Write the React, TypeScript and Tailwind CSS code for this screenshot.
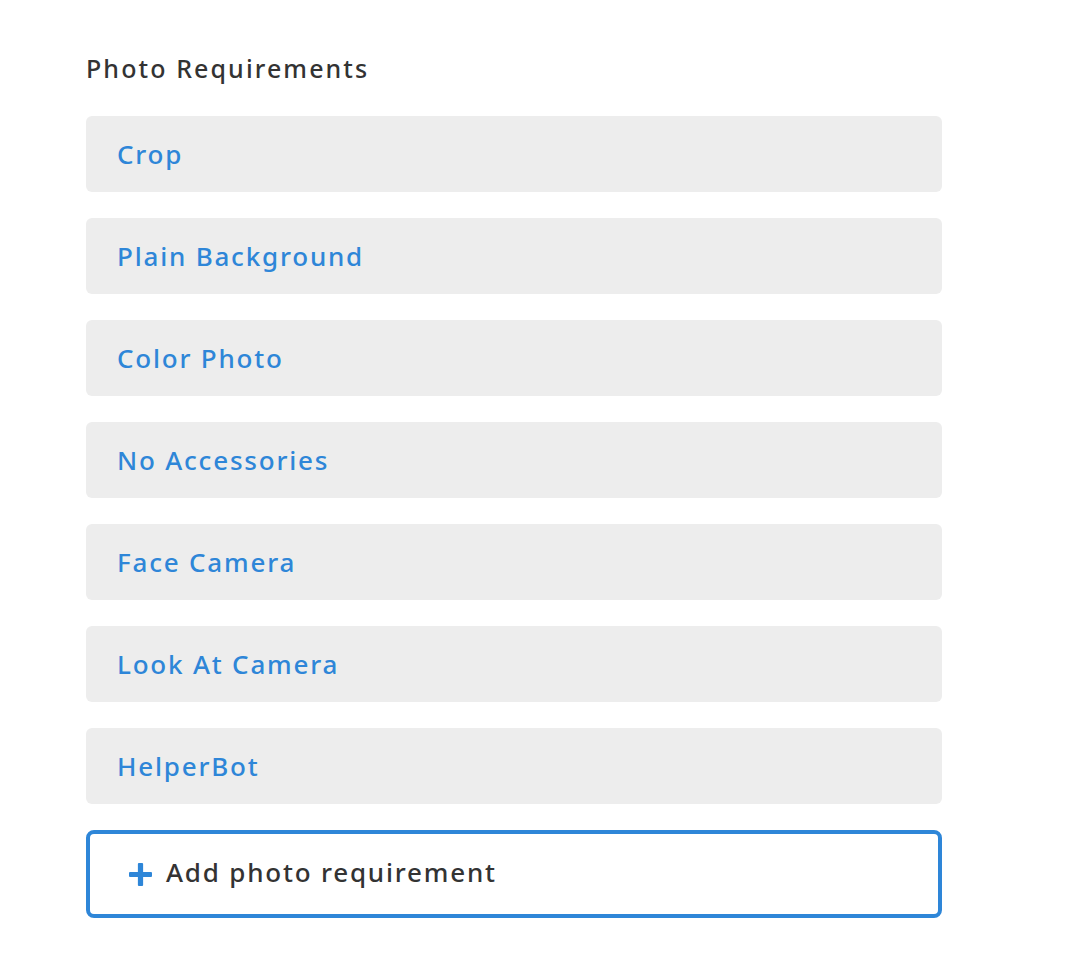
import React from "react";

const items = [
  "Crop",
  "Plain Background",
  "Color Photo",
  "No Accessories",
  "Face Camera",
  "Look At Camera",
  "HelperBot",
];

export default function App() {
  return (
    <div
      className="min-h-[958px] w-full bg-white"
      style={{ fontFamily: '"Noto Sans", "Open Sans", sans-serif' }}
    >
      <div className="pl-[86px] pt-[52px] w-[942px]">
        <h2 className="text-[25px] leading-[32px] font-medium tracking-[2.1px] text-[#333333] mb-[32px]">
          Photo Requirements
        </h2>
        <div className="flex flex-col gap-[26px]">
          {items.map((t) => (
            <div
              key={t}
              className="h-[76px] rounded-[6px] bg-[#ededed] flex items-center pl-[31px]"
            >
              <span className="text-[26px] leading-[34px] font-medium tracking-[1.8px] text-[#2e86d8]">
                {t}
              </span>
            </div>
          ))}
          <button className="h-[88px] rounded-[8px] border-[4px] border-[#2e86d8] bg-white flex items-center pl-[39px] gap-[14px] text-left">
            <svg width="23" height="23" viewBox="0 0 22 22">
              <rect x="8.5" y="0" width="5" height="22" rx="1" fill="#2e86d8" />
              <rect x="0" y="8.5" width="22" height="5" rx="1" fill="#2e86d8" />
            </svg>
            <span className="text-[26px] leading-[34px] font-medium tracking-[1.8px] text-[#333333] -mt-[4px]">
              Add photo requirement
            </span>
          </button>
        </div>
      </div>
    </div>
  );
}
